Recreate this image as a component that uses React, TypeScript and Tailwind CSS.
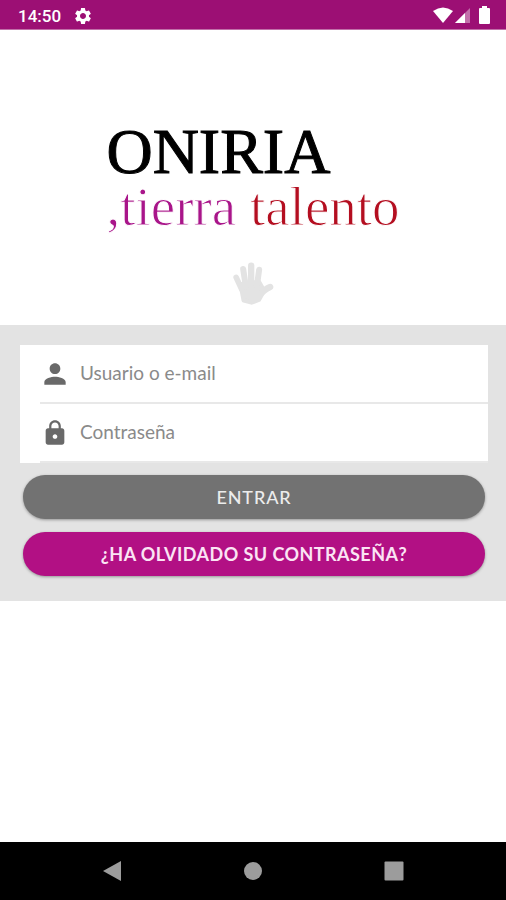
import React, { useState } from 'react';
import { MdLock, MdPerson, MdSettings } from 'react-icons/md';

const HandIcon = () => (
  <svg viewBox="40 36 122 129" className="h-[43px] w-[41px]" fill="none" stroke="#e3e3e3" strokeLinecap="round" strokeLinejoin="round" aria-hidden="true">
    <path d="M63 104 L117 96 L132 122 L117 149 L95 157 L72 151 Z" fill="#e3e3e3" strokeWidth="14" />
    <path d="M49 82 L66 119" strokeWidth="17" />
    <path d="M70 57 L78 109" strokeWidth="18" />
    <path d="M94 47 L94 107" strokeWidth="19" />
    <path d="M118 59 L111 109" strokeWidth="18" />
    <path d="M151 111 Q134 118 117 137" strokeWidth="19" />
  </svg>
);

const StatusBar = () => (
  <div className="flex h-[30px] shrink-0 items-center justify-between border-b border-[#c16fa9] bg-[#9c0f74] pr-4 pl-[18px] text-white">
    <div className="flex items-center gap-3 pt-[2px]">
      <span className="font-[Roboto,sans-serif] text-[17px] leading-5 font-medium">14:50</span>
      <MdSettings className="size-5" />
    </div>
    <div className="flex items-center pt-px">
      <svg viewBox="0 0 20 16" className="h-4 w-5" fill="currentColor" aria-hidden="true">
        <path d="M0 4 Q10 -3 20 4 L10 16 Z" />
      </svg>
      <svg viewBox="0 0 16 16" className="ml-[2px] h-4 w-4" fill="currentColor" aria-hidden="true">
        <path d="M0 16 L15 1 V16 Z" opacity=".4" />
        <path d="M0 16 L10 6 V16 Z" />
      </svg>
      <svg viewBox="0 0 11 18" className="ml-2 h-[18px] w-[11px]" fill="currentColor" aria-hidden="true">
        <path d="M3 0 H8 V2 H10 Q11 2 11 3 V17 Q11 18 10 18 H1 Q0 18 0 17 V3 Q0 2 1 2 H3 Z" />
      </svg>
    </div>
  </div>
);

const Logo = () => (
  <div className="flex flex-col items-center pt-[86px] pb-5">
    <h1 className="font-['Liberation_Serif',serif]">
      <span className="block text-[64px] leading-[72px] text-black [-webkit-text-stroke:1px_black]">ONIRIA</span>
      <span className="mt-[2px] block text-[55px] leading-[34px] whitespace-nowrap text-[#a9158a] [-webkit-text-stroke:1px_white]">
        ,tierra <span className="text-[#b40e20]">talento</span>
      </span>
    </h1>
    <div className="mt-[38px]">
      <HandIcon />
    </div>
  </div>
);

interface FieldProps {
  id: string;
  label: string;
  type: string;
  icon: React.ReactNode;
  value: string;
  onChange: (value: string) => void;
}

const Field: React.FC<FieldProps> = ({ id, label, type, icon, value, onChange }) => (
  <div className="pl-5">
    <div className="flex h-[59px] items-center gap-[10px] border-b-2 border-[#e8e8e8]">
      <label htmlFor={id} aria-label={label} className="flex w-[30px] shrink-0 justify-center text-[#696969]">
        {icon}
      </label>
      <input
        id={id}
        type={type}
        value={value}
        placeholder={label}
        onChange={(e) => onChange(e.target.value)}
        className="h-full min-w-0 flex-1 bg-transparent pb-[2px] text-[19px] text-[#555] outline-none placeholder:text-[#8a8a8a]"
      />
    </div>
  </div>
);

const LoginForm = () => {
  const [user, setUser] = useState('');
  const [password, setPassword] = useState('');

  return (
    <form
      className="bg-[#e3e3e3] pt-5 pr-[18px] pb-[25px] pl-5 font-[Lato,sans-serif]"
      onSubmit={(e) => e.preventDefault()}
    >
      <div className="bg-white">
        <Field
          id="user"
          label="Usuario o e-mail"
          type="text"
          icon={<MdPerson className="size-8 shrink-0" />}
          value={user}
          onChange={setUser}
        />
        <Field
          id="password"
          label="Contraseña"
          type="password"
          icon={<MdLock className="size-7 shrink-0" />}
          value={password}
          onChange={setPassword}
        />
      </div>
      <div className="mt-3 flex flex-col gap-[13px] px-[3px]">
        <button
          type="submit"
          className="h-11 rounded-full bg-[#727272] text-lg font-medium tracking-wider text-[#ececec] shadow-[0_1px_3px_rgba(0,0,0,0.35)]"
        >
          ENTRAR
        </button>
        <button
          type="button"
          className="h-11 rounded-full bg-[#b21084] text-lg font-bold tracking-wide text-[#fbe4f4] shadow-[0_1px_3px_rgba(0,0,0,0.35)]"
        >
          ¿HA OLVIDADO SU CONTRASEÑA?
        </button>
      </div>
    </form>
  );
};

const NavigationBar = () => (
  <nav className="mt-auto flex h-[58px] shrink-0 items-center justify-center gap-[121px] bg-black text-[#9c9c9c]">
    <button type="button" aria-label="Atrás">
      <svg viewBox="0 0 20 22" className="h-[22px] w-5" fill="currentColor">
        <path d="M1 11 L19 1 V21 Z" />
      </svg>
    </button>
    <button type="button" aria-label="Inicio">
      <svg viewBox="0 0 20 20" className="size-5" fill="currentColor">
        <circle cx="10" cy="10" r="9" />
      </svg>
    </button>
    <button type="button" aria-label="Recientes">
      <svg viewBox="0 0 20 20" className="size-5" fill="currentColor">
        <rect x="0.5" y="0.5" width="19" height="19" rx="1" />
      </svg>
    </button>
  </nav>
);

const App = () => (
  <div className="flex min-h-screen flex-col bg-white">
    <StatusBar />
    <main>
      <Logo />
      <LoginForm />
    </main>
    <NavigationBar />
  </div>
);

export default App;
